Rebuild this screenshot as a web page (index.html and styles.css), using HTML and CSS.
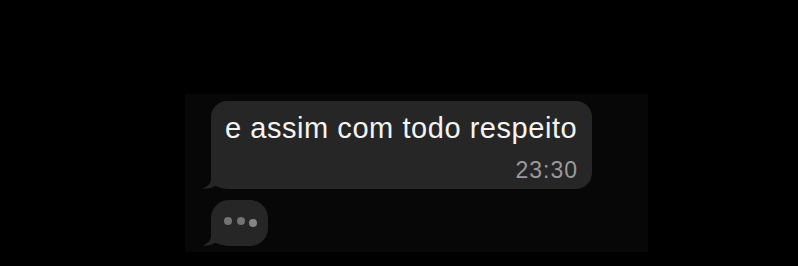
FILE: index.html
```html
<!DOCTYPE html>
<html lang="pt">
<head>
    <meta charset="UTF-8">
    <meta name="viewport" content="width=device-width, initial-scale=1.0">
    <title>Conversa</title>
    <link rel="stylesheet" href="styles.css">
</head>
<body>
    <div class="chat">
        <div class="bubble message">
            <svg class="tail" width="30" height="24" viewBox="0 0 30 24">
                <path d="M10 0 L10 14 C10 18.5 7 21.5 1 23.6 C6 24.2 11 23 14.5 20.8 C17 22.4 20 23 25 23 L30 23 L30 0 Z" fill="#262626"/>
            </svg>
            <div class="message-text">e assim com todo respeito</div>
            <div class="message-time">23:30</div>
        </div>

        <div class="bubble typing">
            <svg class="tail" width="30" height="24" viewBox="0 0 30 24">
                <path d="M10 0 L10 14 C10 18.5 7 21.5 1 23.6 C6 24.2 11 23 14.5 20.8 C17 22.4 20 23 25 23 L30 23 L30 0 Z" fill="#262626"/>
            </svg>
            <span class="dot"></span>
            <span class="dot"></span>
            <span class="dot dot-low"></span>
        </div>
    </div>
</body>
</html>
```

FILE: styles.css
```css
body {
    margin: 0;
    background: #000;
    font-family: 'Liberation Sans', Arial, sans-serif;
    height: 266px;
    overflow: hidden;
}

.chat {
    background: #070707;
    width: 437px;
    margin: 94px 0 0 185px;
    padding: 7px 0 6px 26px;
    display: flex;
    flex-direction: column;
    align-items: flex-start;
    gap: 11px;
}

.bubble {
    position: relative;
    background: #262626;
    border-radius: 16px;
}

.message {
    width: 381px;
    box-sizing: border-box;
    padding: 10px 15px 6px 14px;
}

.message-text {
    position: relative;
    color: #f4f4f4;
    font-size: 29px;
    line-height: 34px;
    letter-spacing: 0.55px;
    white-space: nowrap;
}

.message-time {
    position: relative;
    color: #9a9a9a;
    font-size: 23px;
    line-height: 26px;
    letter-spacing: 1px;
    text-align: right;
    margin-top: 12px;
    margin-right: -1px;
}

.tail {
    position: absolute;
    left: -10px;
    bottom: 0;
    display: block;
}

.typing {
    width: 57px;
    height: 46px;
    box-sizing: border-box;
    border-radius: 18px;
    padding: 17px 0 0 13px;
    display: flex;
    align-items: flex-start;
    gap: 4.5px;
}

.dot {
    position: relative;
    width: 8px;
    height: 8px;
    border-radius: 50%;
    background: #737373;
}

.dot-low {
    margin-top: 1.5px;
    background: #858585;
}
```
